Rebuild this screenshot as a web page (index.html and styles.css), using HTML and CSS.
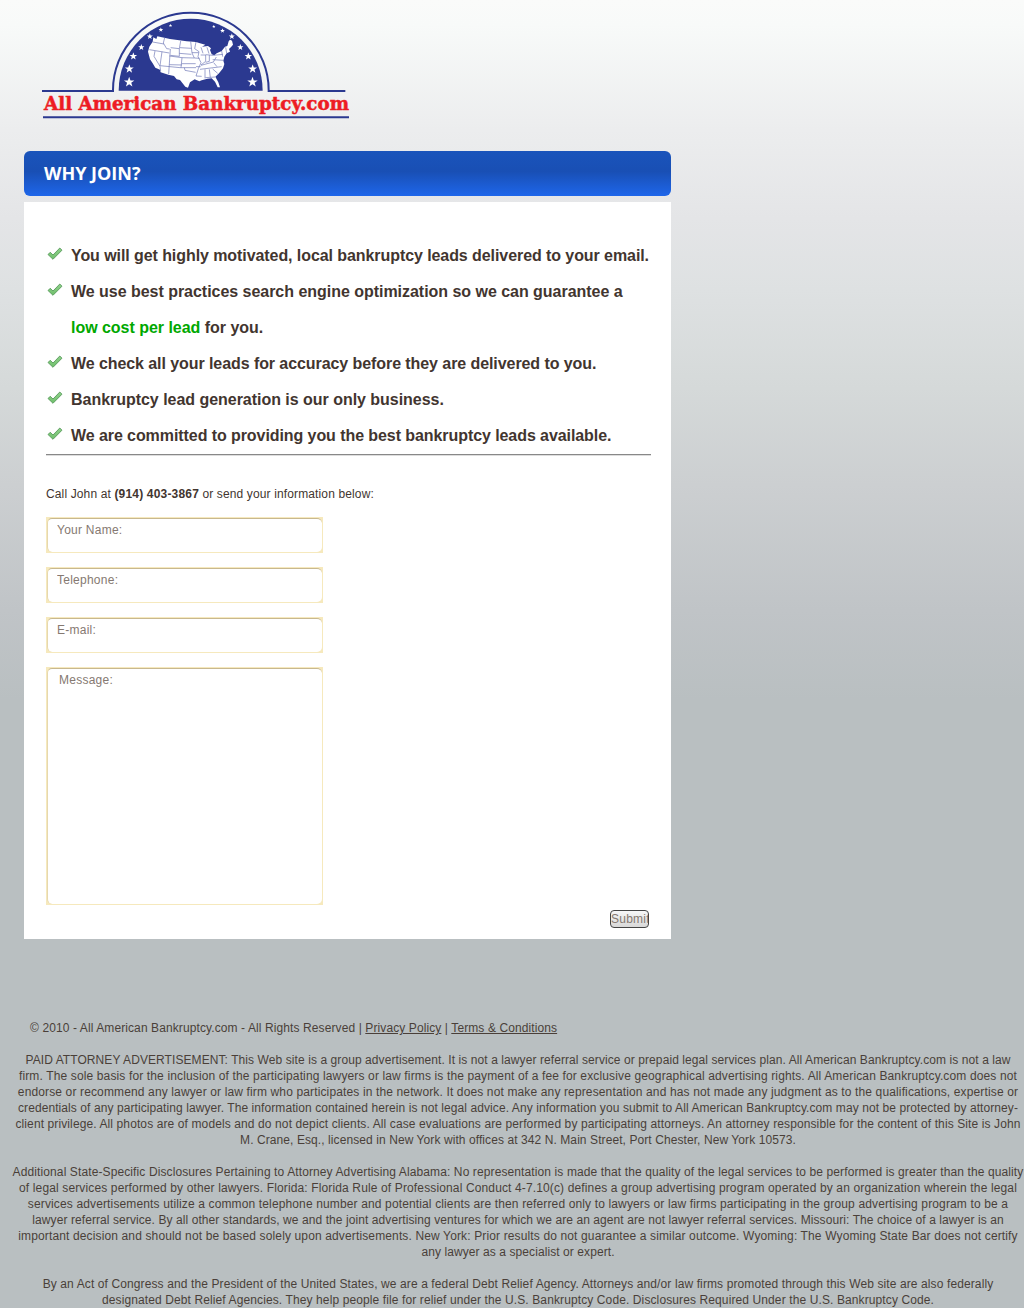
FILE: index.html
```html
<!DOCTYPE html>
<html lang="en">
<head>
<meta charset="utf-8">
<title>All American Bankruptcy.com</title>
<link rel="stylesheet" href="styles.css">
</head>
<body>
<svg width="0" height="0" class="defs">
  <defs>
    <linearGradient id="green" x1="0" y1="0" x2="0" y2="1"><stop offset="0" stop-color="#8fd08a"/><stop offset="1" stop-color="#6fbf6b"/></linearGradient>
    <symbol id="check" viewBox="0 0 16 14"><path d="M1 7.5 3.2 5.3 6 8 12.8 1 15 3.2 6 12.3Z" fill="url(#green)" stroke="#4b9150" stroke-width=".8" stroke-linejoin="round"/></symbol>
    <symbol id="star" viewBox="-10 -10 20 20"><path fill="#fff" d="M0-10 2.4-3.2 9.5-3.1 3.8 1.2 5.9 8.1 0 4-5.9 8.1-3.8 1.2-9.5-3.1-2.4-3.2Z"/></symbol>
  </defs>
</svg>
<header>
  <svg class="logo" viewBox="0 0 990 390" role="img" aria-label="All American Bankruptcy.com">
    <path d="M36 273H249V270A233 231 0 0 1 716 270V273H946" fill="none" stroke="#2b3990" stroke-width="6"/>
    <path d="M266 272A216 216 0 0 1 698 272Z" fill="#2b3990"/>
    <path d="M39 352H957" stroke="#2b3990" stroke-width="6"/>
    <use href="#star" x="281" y="230" width="33" height="33"/><use href="#star" x="651" y="230" width="33" height="33"/>
    <use href="#star" x="284" y="193" width="28" height="28"/><use href="#star" x="654" y="193" width="28" height="28"/>
    <use href="#star" x="298" y="157" width="24" height="24"/><use href="#star" x="643" y="157" width="24" height="24"/>
    <use href="#star" x="324" y="132" width="20" height="20"/><use href="#star" x="621" y="132" width="20" height="20"/>
    <use href="#star" x="350" y="100" width="19" height="19"/><use href="#star" x="596" y="100" width="19" height="19"/>
    <use href="#star" x="385" y="82" width="15" height="15"/><use href="#star" x="570" y="85" width="15" height="15"/>
    <use href="#star" x="416" y="71" width="11" height="11"/><use href="#star" x="546" y="74" width="11" height="11"/>
    <path fill="#fff" d="M370 112 379 117 382 109 420 117 470 124 498 126 510 130 526 134 516 140 534 138 543 145 540 150 545 163 553 166 560 160 575 153 585 140 592 138 596 124 600 119 606 122 609 134 604 140 597 147 600 155 590 160 583 170 580 182 583 192 579 205 567 220 556 230 565 247 570 262 563 262 555 245 545 235 532 236 515 241 508 244 494 238 480 247 474 263 466 260 450 240 440 238 432 228 415 224 392 217 390 209 376 203 368 190 360 178 354 155 358 140 368 125Z"/>
    <path class="borders" d="M368 126 402 132M404 113 400 129 410 146 419 147M358 149 418 159M375 153 372 169 390 199 392 213M396 155 390 197 450 203M421 147 416 222M422 143 448 146 452 123M448 146V169L421 166M418 168 456 173 453 203M418 194 456 195M450 143 484 145M482 124 486 159 493 174M448 160 484 163M456 173 493 174M455 191 497 191M463 203 465 211 497 217M450 203H498M498 126 494 146 507 155 504 170 513 188 505 206 498 228 515 229M486 158H506M493 174 509 175M498 200 512 200M512 165 527 165V184L513 195M527 164 549 166M538 165V184L527 187M513 196 550 186 559 171M510 208 575 200M525 208V235M538 208 541 233M526 233 555 231M548 207 563 220M549 166 579 163M548 179 581 181M551 188 561 200M575 153 578 170M587 142 590 160M513 142 519 160M531 142 537 161"/>
    <text class="brand" x="42" y="329" textLength="915" lengthAdjust="spacingAndGlyphs">All American Bankruptcy.com</text>
  </svg>
</header>
<main>
  <h1>WHY JOIN?</h1>
  <section class="panel">
    <ul>
      <li class="tight"><svg><use href="#check"/></svg><span>You will get highly motivated, local bankruptcy leads delivered to your email.</span></li>
      <li><svg><use href="#check"/></svg><span>We use best practices search engine optimization so we can guarantee a<br><em>low cost per lead</em> for you.</span></li>
      <li class="tight"><svg><use href="#check"/></svg><span>We check all your leads for accuracy before they are delivered to you.</span></li>
      <li><svg><use href="#check"/></svg><span>Bankruptcy lead generation is our only business.</span></li>
      <li class="tight"><svg><use href="#check"/></svg><span>We are committed to providing you the best bankruptcy leads available.</span></li>
    </ul>
    <hr>
    <p class="call">Call John at <b>(914) 403-3867</b> or send your information below:</p>
    <form>
      <div class="field"><input value="Your Name:"></div>
      <div class="field"><input value="Telephone:"></div>
      <div class="field"><input value="E-mail:"></div>
      <div class="field message"><textarea>Message:</textarea></div>
      <button type="button">Submit</button>
    </form>
  </section>
</main>
<footer>
  <p class="copyright">© 2010 - All American Bankruptcy.com - All Rights Reserved | <a href="#">Privacy Policy</a> | <a href="#">Terms &amp; Conditions</a></p>
  <p>
    <span class="narrow">PAID ATTORNEY ADVERTISEMENT: This Web site is a group advertisement. It is not a lawyer referral service or prepaid legal services plan. All American Bankruptcy.com is not a law</span>
    <span class="wide">firm. The sole basis for the inclusion of the participating lawyers or law firms is the payment of a fee for exclusive geographical advertising rights. All American Bankruptcy.com does not</span>
    <span class="wide">endorse or recommend any lawyer or law firm who participates in the network. It does not make any representation and has not made any judgment as to the qualifications, expertise or</span>
    <span class="narrow">credentials of any participating lawyer. The information contained herein is not legal advice. Any information you submit to All American Bankruptcy.com may not be protected by attorney-</span>
    <span>client privilege. All photos are of models and do not depict clients. All case evaluations are performed by participating attorneys. An attorney responsible for the content of this Site is John</span>
    <span class="narrow">M. Crane, Esq., licensed in New York with offices at 342 N. Main Street, Port Chester, New York 10573.</span>
  </p>
  <p>
    <span>Additional State-Specific Disclosures Pertaining to Attorney Advertising Alabama: No representation is made that the quality of the legal services to be performed is greater than the quality</span>
    <span class="wide">of legal services performed by other lawyers. Florida: Florida Rule of Professional Conduct 4-7.10(c) defines a group advertising program operated by an organization wherein the legal</span>
    <span class="wide">services advertisements utilize a common telephone number and potential clients are then referred only to lawyers or law firms participating in the group advertising program to be a</span>
    <span class="narrow">lawyer referral service. By all other standards, we and the joint advertising ventures for which we are an agent are not lawyer referral services. Missouri: The choice of a lawyer is an</span>
    <span class="wide">important decision and should not be based solely upon advertisements. New York: Prior results do not guarantee a similar outcome. Wyoming: The Wyoming State Bar does not certify</span>
    <span class="narrow">any lawyer as a specialist or expert.</span>
  </p>
  <p>
    <span>By an Act of Congress and the President of the United States, we are a federal Debt Relief Agency. Attorneys and/or law firms promoted through this Web site are also federally</span>
    <span>designated Debt Relief Agencies. They help people file for relief under the U.S. Bankruptcy Code. Disclosures Required Under the U.S. Bankruptcy Code.</span>
  </p>
</footer>
</body>
</html>
```
FILE: styles.css
```css
* { box-sizing: border-box; }
body {
  margin: 0;
  height: 1308px;
  overflow: hidden;
  font: 12px/16px "Liberation Sans", Arial, sans-serif;
  color: #42352f;
  background: #b9bfc1 linear-gradient(#fafbfa, #f8faf9 25px, #ecedee 130px, #e4e5e7 218px, #dee1e2 290px, #d5d9d9 388px, #cccfd1 485px, #c0c4c7 610px, #b9bfc1 700px) no-repeat;
}
.defs { display: block; }
header { height: 151px; padding-left: 30px; }
.logo { display: block; width: 330px; height: 130px; }
.borders { fill: none; stroke: #6c76b5; stroke-width: 2; }
.brand { font: bold 54px "DejaVu Serif", serif; fill: #ed1c24; stroke: #ed1c24; stroke-width: 1.5; }
main { width: 647px; margin-left: 24px; }
h1 {
  height: 45px;
  margin: 0 0 6px;
  padding-left: 20px;
  border-radius: 6px;
  background: linear-gradient(#1a54bb, #194fb4 45%, #1e66ea);
  color: #fff;
  font: bold 18px/45px "Open Sans", sans-serif;
}
.panel { height: 737px; padding: 36px 20px 0 22px; background: #fff; }
ul { margin: 0; padding: 0; list-style: none; font-size: 16px; line-height: 36px; font-weight: bold; }
li { display: flex; white-space: nowrap; letter-spacing: -.03px; }
li.tight { letter-spacing: -.075px; }
li svg { flex: none; width: 16px; height: 14px; margin: 9px 8px 0 1px; }
em { font-style: normal; color: #00a800; }
hr { margin: 0; border: 0; border-top: 1px solid #888; border-bottom: 1px solid #ddd; }
.call { margin: 30px 0 15px; letter-spacing: .13px; }
.call b { letter-spacing: .18px; }
form { display: flex; flex-direction: column; }
.field {
  width: 277px;
  height: 36px;
  margin-bottom: 14px;
  padding: 1px;
  background: #f6e9bd;
}
.field input, .field textarea {
  display: block;
  width: 100%;
  height: 100%;
  padding: 2px 9px 13px;
  border: 0 solid #e6d8ae;
  border-top: 1px solid #c8b88f;
  border-left-width: 1px;
  border-radius: 5px;
  outline: 0;
  background: #fff;
  color: #857971;
  font: 12px/16px "Liberation Sans", Arial, sans-serif;
  letter-spacing: .25px;
  resize: none;
}
.field.message { height: 238px; margin-bottom: 5px; }
.field textarea { padding: 3px 11px; }
button {
  align-self: flex-end;
  width: 39px;
  height: 18px;
  margin-right: 2px;
  padding: 0;
  overflow: hidden;
  border: 1px solid #444;
  border-radius: 4px;
  background: linear-gradient(#f7f7f7, #d8d8d8);
  color: #857971;
  font: 12px/16px "Liberation Sans", Arial, sans-serif;
  letter-spacing: .25px;
}
footer { padding: 81px 0 0 12px; color: #4a3f39; letter-spacing: .11px; }
footer p { margin: 0 0 16px; text-align: center; white-space: nowrap; }
footer .copyright { padding-left: 18px; text-align: left; letter-spacing: .1px; }
footer span { display: block; }
footer .narrow { letter-spacing: .082px; }
footer .wide { letter-spacing: .135px; }
a { color: inherit; }
```
